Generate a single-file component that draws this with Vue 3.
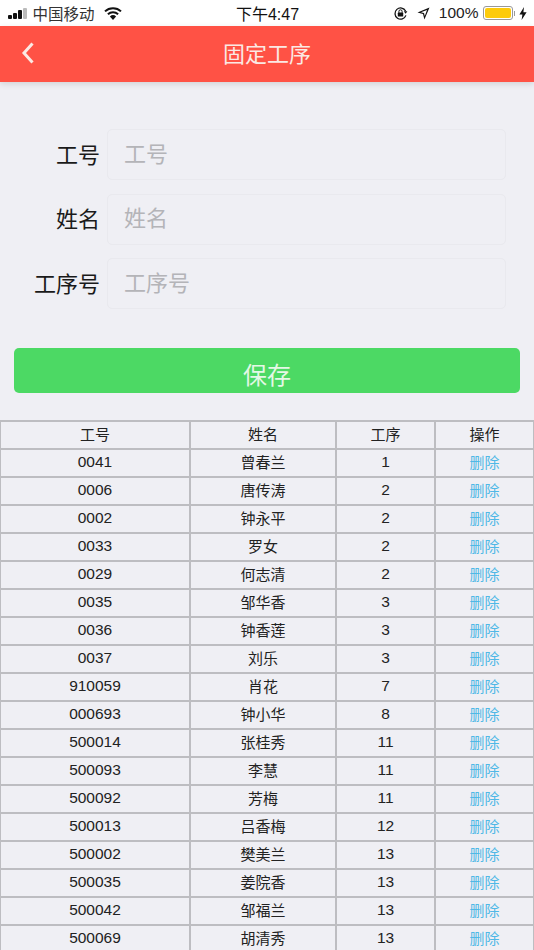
<template>
  <div class="page">
    <div class="status-bar">
      <div class="status-left">
        <span class="signal"><i></i><i></i><i></i><i class="off"></i></span>
        <span class="carrier">中国移动</span>
        <svg class="wifi" width="18" height="13" viewBox="0 0 18 13">
          <path d="M9 13 L5.9 9.4 A4.6 4.6 0 0 1 12.1 9.4 Z" fill="#111" />
          <path d="M3.9 7.3 A7.6 7.6 0 0 1 14.1 7.3" fill="none" stroke="#111" stroke-width="2" />
          <path d="M1 4.4 A11.6 11.6 0 0 1 17 4.4" fill="none" stroke="#111" stroke-width="2" />
        </svg>
      </div>
      <div class="status-time">下午4:47</div>
      <div class="status-right">
        <svg class="lock" width="15" height="15" viewBox="0 0 15 15">
          <path d="M12.6 5 A5.6 5.6 0 1 0 12.9 9.4" fill="none" stroke="#111" stroke-width="1.3" />
          <path d="M10.8 5.2 L14.4 5.2 L12.6 7.8 Z" fill="#111" />
          <rect x="4.8" y="6.6" width="5.4" height="4" rx="0.6" fill="#111" />
          <path d="M5.9 6.8 V5.4 A1.6 1.6 0 0 1 9.1 5.4 V6.8" fill="none" stroke="#111" stroke-width="1" />
        </svg>
        <svg class="arrow" width="13" height="13" viewBox="0 0 13 13">
          <path d="M12.5 0.5 L7.4 12.5 L6 7 L0.5 5.6 Z M10 3 L4 5.2 L7 6 L7.8 9 Z" fill="#111" fill-rule="evenodd" />
        </svg>
        <span class="percent">100%</span>
        <span class="battery"><span class="battery-fill"></span></span>
        <span class="battery-tip"></span>
        <svg class="bolt" width="8" height="13" viewBox="0 0 8 13">
          <path d="M5 0 L0.4 7.4 H3.4 L2.6 13 L7.6 5.2 H4.4 Z" fill="#111" />
        </svg>
      </div>
    </div>

    <header class="nav-bar">
      <svg class="back" width="14" height="22" viewBox="0 0 14 22">
        <path d="M11.5 1.5 L3 11 L11.5 20.5" fill="none" stroke="#fbe9e4" stroke-width="3" />
      </svg>
      <h1 class="nav-title">固定工序</h1>
    </header>

    <form class="form" @submit.prevent>
      <label v-for="field in fields" :key="field" class="form-row">
        <span class="form-label">{{ field }}</span>
        <input class="form-input" type="text" :placeholder="field" />
      </label>
    </form>

    <div class="save-wrap">
      <button class="save-btn" type="button">保存</button>
    </div>

    <table class="grid">
      <colgroup>
        <col class="col-no" />
        <col class="col-name" />
        <col class="col-step" />
        <col class="col-op" />
      </colgroup>
      <thead>
        <tr>
          <th>工号</th>
          <th>姓名</th>
          <th>工序</th>
          <th>操作</th>
        </tr>
      </thead>
      <tbody>
        <tr v-for="row in rows" :key="row.no">
          <td class="num">{{ row.no }}</td>
          <td>{{ row.name }}</td>
          <td class="num">{{ row.step }}</td>
          <td class="del">删除</td>
        </tr>
      </tbody>
    </table>
  </div>
</template>

<script setup>
const fields = ['工号', '姓名', '工序号'];

const rows = [
  { no: '0041', name: '曾春兰', step: 1 },
  { no: '0006', name: '唐传涛', step: 2 },
  { no: '0002', name: '钟永平', step: 2 },
  { no: '0033', name: '罗女', step: 2 },
  { no: '0029', name: '何志清', step: 2 },
  { no: '0035', name: '邹华香', step: 3 },
  { no: '0036', name: '钟香莲', step: 3 },
  { no: '0037', name: '刘乐', step: 3 },
  { no: '910059', name: '肖花', step: 7 },
  { no: '000693', name: '钟小华', step: 8 },
  { no: '500014', name: '张桂秀', step: 11 },
  { no: '500093', name: '李慧', step: 11 },
  { no: '500092', name: '芳梅', step: 11 },
  { no: '500013', name: '吕香梅', step: 12 },
  { no: '500002', name: '樊美兰', step: 13 },
  { no: '500035', name: '姜院香', step: 13 },
  { no: '500042', name: '邹福兰', step: 13 },
  { no: '500069', name: '胡清秀', step: 13 },
];
</script>

<style>
html,
body {
  background: #efeff4;
  overflow: hidden;
}
</style>

<style scoped>
.page {
  width: 534px;
  height: 950px;
  overflow: hidden;
  background: #efeff4;
  font-family: "Liberation Sans", "Noto Sans CJK SC", sans-serif;
  color: #111;
}

.status-bar {
  height: 26px;
  background: #fff;
  display: grid;
  grid-template-columns: 1fr auto 1fr;
  align-items: center;
  padding: 0 7px 0 8px;
  box-sizing: border-box;
  font-size: 15.5px;
}

.status-left {
  display: flex;
  align-items: center;
}

.signal {
  display: flex;
  align-items: flex-end;
  gap: 1.5px;
  height: 11px;
  margin-right: 6px;
}

.signal i {
  display: block;
  width: 3.5px;
  border-radius: 1px;
  background: #111;
}

.signal i:nth-child(1) { height: 4px; }
.signal i:nth-child(2) { height: 6px; }
.signal i:nth-child(3) { height: 9px; }
.signal i:nth-child(4) { height: 11px; }

.signal .off {
  background: #bbb;
}

.carrier {
  color: #333;
}

.wifi {
  margin-left: 9px;
}

.status-time {
  font-size: 16px;
}

.status-right {
  display: flex;
  align-items: center;
  justify-content: flex-end;
}

.lock {
  margin-right: 9px;
}

.arrow {
  margin-right: 9px;
}

.percent {
  color: #222;
  margin-right: 4px;
}

.battery {
  width: 30px;
  height: 14px;
  box-sizing: border-box;
  border: 1px solid #999;
  border-radius: 3px;
  padding: 1px;
  display: flex;
}

.battery-fill {
  flex: 1;
  background: #fdcb0b;
  border-radius: 2px;
}

.battery-tip {
  width: 1.5px;
  height: 5px;
  background: #999;
  margin-left: 1px;
  margin-right: 4px;
}

.nav-bar {
  height: 56px;
  background: #ff5245;
  box-shadow: 0 2px 6px rgba(0, 0, 0, 0.12);
  position: relative;
  display: flex;
  align-items: center;
  justify-content: center;
}

.back {
  position: absolute;
  left: 21px;
  top: 16px;
}

.nav-title {
  margin: 0 0 4px;
  font-size: 22px;
  font-weight: 400;
  color: #fbe9e4;
}

.form {
  padding: 47px 28px 0 0;
  display: flex;
  flex-direction: column;
  gap: 13.5px;
}

.form-row {
  display: flex;
  align-items: center;
  height: 51px;
}

.form-label {
  width: 100px;
  margin: 0 7px 4px 0;
  text-align: right;
  font-size: 22px;
  color: #1a1a1a;
  flex: none;
}

.form-input {
  flex: 1;
  min-width: 0;
  height: 100%;
  box-sizing: border-box;
  padding: 0 16px;
  border: 1px solid #e9e9ee;
  border-radius: 5px;
  background: #efeff4;
  font-family: inherit;
  font-size: 22px;
  outline: none;
}

.form-input::placeholder {
  color: #b4b4b8;
  opacity: 1;
}

.save-wrap {
  padding: 39px 14px 27px;
}

.save-btn {
  display: block;
  width: 100%;
  height: 45px;
  border: 0;
  border-radius: 5px;
  background: #4cd964;
  color: #e4f8e6;
  font-family: inherit;
  font-size: 24px;
  padding: 6px 0 0;
}

.grid {
  width: 534px;
  margin-left: -1px;
  table-layout: fixed;
  border-collapse: collapse;
  border: 2px solid #bdbdc1;
  font-size: 15px;
  color: #222;
}

.col-no { width: 190px; }
.col-name { width: 146px; }
.col-step { width: 99px; }
.col-op { width: 99px; }

.grid th,
.grid td {
  height: 28px;
  box-sizing: border-box;
  padding: 0 0 4px;
  border: 2px solid #bdbdc1;
  text-align: center;
  font-weight: 400;
  vertical-align: middle;
}

.grid .num {
  padding-bottom: 2px;
  font-size: 15.5px;
}

.grid .del {
  color: #4fb8e6;
}
</style>
